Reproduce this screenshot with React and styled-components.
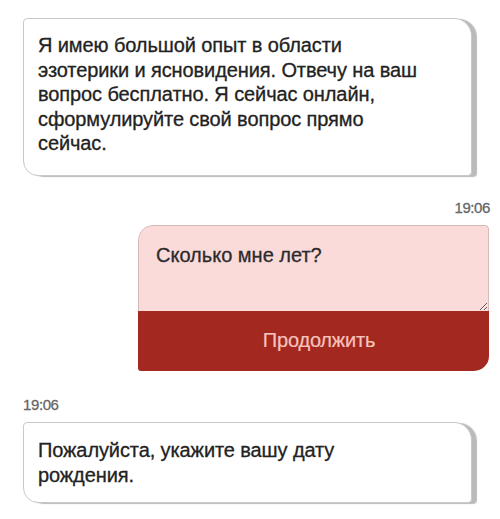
import React from 'react'
import styled, { createGlobalStyle } from 'styled-components'

const Global = createGlobalStyle`
  html, body {
    margin: 0;
    padding: 0;
    background: #ffffff;
  }
  body {
    font-family: "Liberation Sans", Arial, sans-serif;
    color: #252525;
  }
`

const Chat = styled.div`
  width: 500px;
  height: 519px;
  box-sizing: border-box;
  padding: 18px 10px 0 23px;
  display: flex;
  flex-direction: column;
  overflow: hidden;
`

const Bubble = styled.div`
  box-sizing: border-box;
  width: 449px;
  border: 1px solid #c9c9c9;
  border-radius: 4px 18px 4px 15px;
  box-shadow: 5px 1px 1px rgba(0, 0, 0, 0.27);
  background: #fff;
  padding: ${(p) => p.$pad};
  font-size: 20px;
  line-height: ${(p) => p.$lh};
  color: #222;
  -webkit-text-stroke: 0.3px #222;
  letter-spacing: -0.1px;
  white-space: nowrap;
`

const Time = styled.div`
  font-size: 15px;
  line-height: 16px;
  color: #666;
  -webkit-text-stroke: 0.3px #666;
  letter-spacing: -0.4px;
  align-self: ${(p) => (p.$right ? 'flex-end' : 'flex-start')};
  margin: ${(p) => p.$m};
`

const Form = styled.div`
  align-self: flex-end;
  margin-right: 1px;
  width: 351px;
  display: flex;
  flex-direction: column;
  border-radius: 15px 4px 15px 3px;
  overflow: hidden;
`

const Field = styled.textarea`
  display: block;
  box-sizing: border-box;
  width: 100%;
  height: 86px;
  margin: 0;
  border: 1px solid #d4b9b9;
  border-bottom: none;
  border-radius: 15px 4px 0 0;
  background: #fbdada;
  padding: 17px 17px;
  font-family: "Liberation Sans", Arial, sans-serif;
  font-size: 20px;
  line-height: 24px;
  color: #2b2b2b;
  -webkit-text-stroke: 0.3px #2b2b2b;
  resize: vertical;
  outline: none;
`

const Continue = styled.button`
  height: 60px;
  border: none;
  margin: 0;
  background: #a3281f;
  color: #f6c3bc;
  -webkit-text-stroke: 0.2px #f6c3bc;
  font-family: "Liberation Sans", Arial, sans-serif;
  font-size: 20px;
  letter-spacing: -0.2px;
  padding: 0 0 0 11px;
  cursor: pointer;
`

export default function App() {
  return (
    <>
      <Global />
      <Chat>
        <Bubble $pad="14px 14px 19px 14px" $lh="24.5px">
          Я имею большой опыт в области
          <br />
          эзотерики и ясновидения. Отвечу на ваш
          <br />
          вопрос бесплатно. Я сейчас онлайн,
          <br />
          сформулируйте свой вопрос прямо
          <br />
          сейчас.
        </Bubble>
        <Time $right $m="24px 0 9px 0">19:06</Time>
        <Form>
          <Field readOnly value="Сколько мне лет?" />
          <Continue>Продолжить</Continue>
        </Form>
        <Time $m="26px 0 9px 0">19:06</Time>
        <Bubble $pad="15px 14px 14px 14px" $lh="25px">
          Пожалуйста, укажите вашу дату
          <br />
          рождения.
        </Bubble>
      </Chat>
    </>
  )
}
